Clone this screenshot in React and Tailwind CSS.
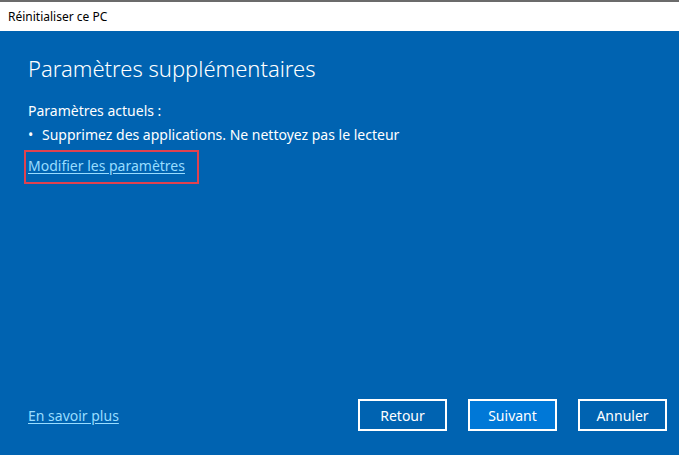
import React from "react";

const font = { fontFamily: '"Noto Sans", "Open Sans", sans-serif' };

function Button({ children, primary }) {
  return (
    <button
      className={
        "w-[89px] h-[32px] border-2 border-white text-white text-[14px] " +
        (primary ? "bg-[#0078d7]" : "bg-transparent")
      }
    >
      {children}
    </button>
  );
}

export default function App() {
  return (
    <div className="w-[679px] h-[455px] flex flex-col bg-[#0063b1]" style={font}>
      <div className="h-[31px] bg-white border-t-2 border-[#6b6b6b] flex items-center px-[8px] text-[12px] text-black">
        Réinitialiser ce PC
      </div>

      <div className="flex-1 flex flex-col px-[28px] pt-[22px] pb-[24px] text-white">
        <h1 className="text-[22px] font-light leading-[30px]">Paramètres supplémentaires</h1>

        <div className="mt-[16px] text-[14px] leading-[24px]">
          <div>Paramètres actuels :</div>
          <div className="flex">
            <span className="w-[14px]">•</span>
            <span>Supprimez des applications. Ne nettoyez pas le lecteur</span>
          </div>
        </div>

        <div className="mt-[3px] -ml-[4px] w-[175px] h-[34px] border-2 border-[#e0424f] pl-[2px] pt-[1px]">
          <a href="#" className="text-[14px] text-[#99ddff] underline underline-offset-2">
            Modifier les paramètres
          </a>
        </div>

        <div className="mt-auto flex items-center">
          <a href="#" className="text-[14px] text-[#99ddff] underline underline-offset-2">
            En savoir plus
          </a>
          <div className="ml-auto flex gap-[21px] -mr-[16px]">
            <Button>Retour</Button>
            <Button primary>Suivant</Button>
            <Button>Annuler</Button>
          </div>
        </div>
      </div>
    </div>
  );
}
